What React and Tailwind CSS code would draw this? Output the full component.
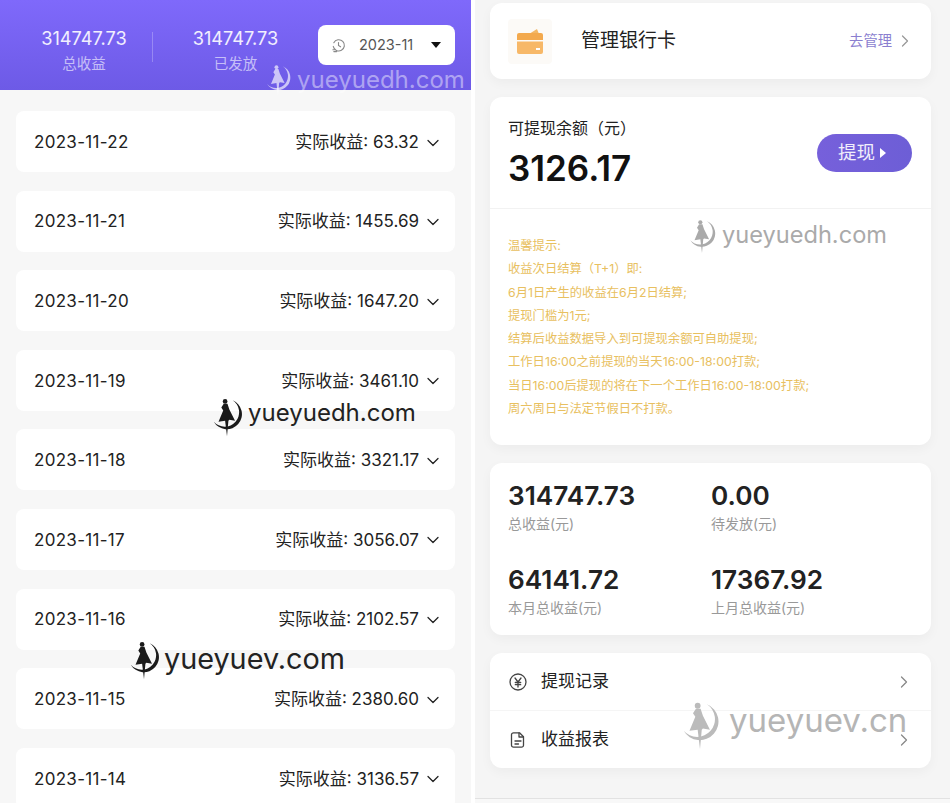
import React from 'react';
import { ChevronDown, ChevronRight } from 'lucide-react';

const FONT = "font-['Inter','Noto_Sans_CJK_SC',sans-serif]";

const days = [
  ['2023-11-22', '63.32'],
  ['2023-11-21', '1455.69'],
  ['2023-11-20', '1647.20'],
  ['2023-11-19', '3461.10'],
  ['2023-11-18', '3321.17'],
  ['2023-11-17', '3056.07'],
  ['2023-11-16', '2102.57'],
  ['2023-11-15', '2380.60'],
  ['2023-11-14', '3136.57'],
];

const tips = [
  '温馨提示:',
  '收益次日结算（T+1）即:',
  '6月1日产生的收益在6月2日结算;',
  '提现门槛为1元;',
  '结算后收益数据导入到可提现余额可自助提现;',
  '工作日16:00之前提现的当天16:00-18:00打款;',
  '当日16:00后提现的将在下一个工作日16:00-18:00打款;',
  '周六周日与法定节假日不打款。',
];

const stats = [
  ['314747.73', '总收益(元)'],
  ['0.00', '待发放(元)'],
  ['64141.72', '本月总收益(元)'],
  ['17367.92', '上月总收益(元)'],
];

// crescent + figure mark used by the watermark
const MoonMark = ({ className, color }) => (
  <svg viewBox="0 0 36 42" className={className} fill="none">
    <path d="M24 3.200A16 16 0 1 1 4 26A15.300 15.300 0 1 0 24 3.200z" fill={color} />
    <circle cx="16" cy="4.500" r="2.500" fill={color} />
    <path d="M14.500 7h4l2 6 6 12-6-1-1 1-1.500 16.500L16 25l-7 1 5-12-2-3z" fill={color} />
  </svg>
);

const Watermark = ({ text, className, textClass, markClass, color }) => (
  <div className={`absolute flex items-center pointer-events-none ${className}`}>
    <MoonMark className={markClass} color={color} />
    <span className={`font-['Inter',sans-serif] ${textClass}`}>{text}</span>
  </div>
);

const DayRow = ({ date, amount }) => (
  <div className="h-[61px] shrink-0 bg-white rounded-lg flex items-center justify-between pl-[18px] pr-3 pt-[2px] text-[#222]">
    <span className="text-[17px] tracking-[0.3px]">{date}</span>
    <span className="flex items-center gap-[4px] text-[17px]">
      实际收益: {amount}
      <ChevronDown className="w-[20px] h-[20px]" strokeWidth={1.5} />
    </span>
  </div>
);

const Card = ({ className = '', children }) => (
  <div className={`bg-white rounded-xl shadow-[0_4px_12px_rgba(0,0,0,0.04)] ${className}`}>{children}</div>
);

const App = () => {
  return (
    <div className={`${FONT} relative w-[950px] h-[803px] overflow-hidden bg-white flex`}>
      {/* Left: earnings list */}
      <div className="w-[471px] h-full bg-[#f7f7f7] flex flex-col">
        <div className="h-[90px] shrink-0 bg-gradient-to-b from-[#7f69fb] to-[#6d5ae6] flex items-start pl-4 pr-4 pt-[25px]">
          <div className="w-[136px] pt-[1px] text-center">
            <div className="text-[18.2px] leading-[24px] text-white/90">314747.73</div>
            <div className="text-[14.5px] leading-[28px] text-white/60">总收益</div>
          </div>
          <div className="w-px h-[30px] mt-[7px] bg-white/25" />
          <div className="w-[165px] pt-[1px] text-center">
            <div className="text-[18.2px] leading-[24px] text-white/90">314747.73</div>
            <div className="text-[14.5px] leading-[28px] text-white/60">已发放</div>
          </div>
          <div className="w-[137px] h-[40px] bg-white rounded-lg flex items-center pl-[13px] pr-[14px] text-[#555] text-[14.5px]">
            <svg viewBox="0 0 16 16" className="w-[15px] h-[15px]" fill="none" stroke="#888" strokeWidth="1.2" strokeLinecap="round">
              <path d="M3 5a6 6 0 1 1-.6 4" />
              <path d="M8 4.800V8l2.200 1.400M2 12.500h2M3 14.500h3" />
            </svg>
            <span className="ml-[13px]">2023-11</span>
            <svg viewBox="0 0 10 6" className="w-[10px] h-[6px] ml-auto"><path d="M0 0h10L5 6z" fill="#111" /></svg>
          </div>
        </div>
        <div className="flex-1 overflow-hidden px-4 pt-[21px] flex flex-col gap-[18.6px]">
          {days.map(([d, a]) => <DayRow key={d} date={d} amount={a} />)}
        </div>
      </div>

      {/* Right: balance panels */}
      <div className="ml-[4px] w-[475px] h-full bg-[#f8f8f8]">
        <div className="h-[799px] bg-[#f5f5f5] border-b border-[#e2e2e2] pl-[15px] pr-[19px] pt-[3px] flex flex-col gap-[18px]">
          <Card className="h-[76px] shrink-0 flex items-center pl-[18px] pr-[18px]">
            <div className="w-[44px] h-[45px] bg-[#fcfaf7] rounded flex items-center justify-center">
              <svg viewBox="0 0 26 26" className="w-[26px] h-[26px]">
                <path d="M12 6l8-5 2 5z" fill="#f3b765" />
                <path d="M2 5h22a2 2 0 0 1 2 2v5H0V7a2 2 0 0 1 2-2z" fill="#f3a94d" />
                <path d="M0 13.500h26V24a2 2 0 0 1-2 2H2a2 2 0 0 1-2-2z" fill="#f7b868" />
                <rect x="19" y="20" width="4" height="2" fill="#fff" />
              </svg>
            </div>
            <span className="ml-[29px] text-[19px] text-[#222]">管理银行卡</span>
            <span className="ml-auto text-[14.3px] -mt-[1px] text-[#8b7fd0]">去管理</span>
            <ChevronRight className="w-[20px] h-[20px] ml-[3px] -mr-[2px] text-[#999]" strokeWidth={1.5} />
          </Card>

          <Card className="h-[348px] shrink-0 flex flex-col">
            <div className="h-[112px] shrink-0 border-b border-[#f2f2f2] flex items-center justify-between pl-[18px] pr-[19px]">
              <div>
                <div className="text-[16px] leading-[24px] text-[#222]">可提现余额（元）</div>
                <div className="text-[35px] leading-[44px] font-semibold text-[#111] mt-[6px]">3126.17</div>
              </div>
              <div className="w-[95px] h-[38px] rounded-full bg-gradient-to-r from-[#7660db] to-[#6d5ed6] flex items-center justify-center gap-[5px] pr-[5px] text-[18.5px] text-white/90">
                提现
                <svg viewBox="0 0 6 10" className="w-[6px] h-[10px]"><path d="M0 0l6 5-6 5z" fill="#fff" /></svg>
              </div>
            </div>
            <div className="pl-[18px] pt-[25px] flex flex-col text-[12.3px] leading-[23.3px] text-[#e8c060]">
              {tips.map((t) => <div key={t}>{t}</div>)}
            </div>
          </Card>

          <Card className="h-[172px] shrink-0 grid grid-cols-[203px_1fr] pl-[18px] pt-[17px]">
            {stats.map(([v, l]) => (
              <div key={l} className="h-[84px]">
                <div className="text-[26.2px] leading-[32px] font-semibold text-[#222]">{v}</div>
                <div className="text-[14px] leading-[24px] text-[#999]">{l}</div>
              </div>
            ))}
          </Card>

          <Card className="h-[115px] shrink-0 flex flex-col">
            <div className="h-[58px] border-b border-[#f5f5f5] flex items-center pl-[19px] pr-[17px] text-[17px] text-[#222]">
              <svg viewBox="0 0 18 18" className="w-[18px] h-[18px]" fill="none" stroke="#444" strokeWidth="1.3" strokeLinecap="round" strokeLinejoin="round">
                <circle cx="9" cy="9" r="8" />
                <path d="M6 5l3 4 3-4M9 9v5M6.300 9.500h5.400M6.300 11.700h5.400" />
              </svg>
              <span className="ml-[14px]">提现记录</span>
              <ChevronRight className="w-[20px] h-[20px] ml-auto text-[#888]" strokeWidth={1.5} />
            </div>
            <div className="flex-1 flex items-center pl-[19px] pr-[17px] text-[17px] text-[#222]">
              <svg viewBox="0 0 18 18" className="w-[18px] h-[18px]" fill="none" stroke="#444" strokeWidth="1.3" strokeLinecap="round" strokeLinejoin="round">
                <path d="M4.500 1.800h6l4 4v8.400a2 2 0 0 1-2 2h-8a2 2 0 0 1-2-2V3.800a2 2 0 0 1 2-2z" />
                <path d="M10 2v4h4.400M6 10h6M6 13h3.500" />
              </svg>
              <span className="ml-[14px]">收益报表</span>
              <ChevronRight className="w-[20px] h-[20px] ml-auto text-[#888]" strokeWidth={1.5} />
            </div>
          </Card>
        </div>
      </div>

      {/* Watermarks */}
      <Watermark text="yueyuedh.com" className="left-[264px] top-[62px]" markClass="w-[28px] h-[36px] mr-[5px]" textClass="text-[24px] text-white/45" color="rgba(255,255,255,0.65)" />
      <Watermark text="yueyuedh.com" className="left-[210px] top-[396px]" markClass="w-[34px] h-[42px] mr-[4px]" textClass="text-[24px] -mt-[8px] text-[#222]" color="#1a1a1a" />
      <Watermark text="yueyuev.com" className="left-[127px] top-[639px]" markClass="w-[34px] h-[40px] mr-[3px]" textClass="text-[28.8px] -mt-[2px] text-[#222]" color="#1a1a1a" />
      <Watermark text="yueyuedh.com" className="left-[687px] top-[218px]" markClass="w-[30px] h-[36px] mr-[5px]" textClass="text-[23.6px] -mt-[2px] text-[#aaa]" color="#aaa" />
      <Watermark text="yueyuev.cn" className="left-[679px] top-[700px]" markClass="w-[42px] h-[50px] mr-[8px]" textClass="text-[33px] -mt-[8px] text-[#b5b5b5]" color="#bbb" />
    </div>
  );
};

export default App;
